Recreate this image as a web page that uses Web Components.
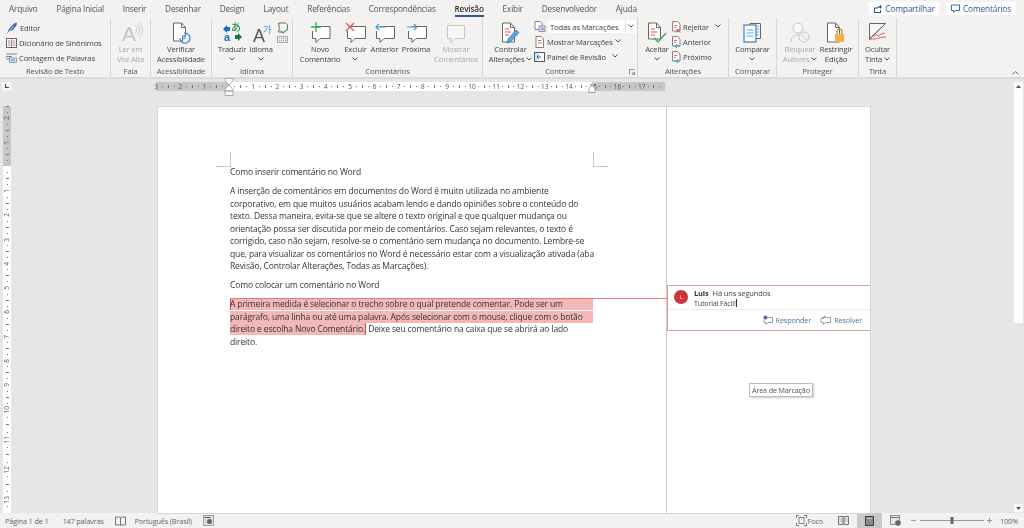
<!DOCTYPE html>
<html lang="pt-BR"><head><meta charset="utf-8"><title>Word</title>
<style>
html,body{margin:0;height:100%;overflow:hidden;background:#e6e6e6}
body{font:7.600px "Open Sans","Noto Sans",sans-serif;color:#444;letter-spacing:-.15px}
word-app{width:1024px;height:528px;filter:blur(.3px)}
</style></head><body>
<word-app>
  <w-tabbar slot="tabs">
    <w-tab>Arquivo</w-tab><w-tab>Página Inicial</w-tab><w-tab>Inserir</w-tab><w-tab>Desenhar</w-tab><w-tab>Design</w-tab><w-tab>Layout</w-tab><w-tab>Referências</w-tab><w-tab>Correspondências</w-tab><w-tab active>Revisão</w-tab><w-tab>Exibir</w-tab><w-tab>Desenvolvedor</w-tab><w-tab>Ajuda</w-tab>
    <w-share slot="right" style="width:70px"><w-icon name="share"></w-icon>Compartilhar</w-share>
    <w-share slot="right" style="width:70px"><w-icon name="cmt"></w-icon>Comentários</w-share>
  </w-tabbar>
  <w-ribbon slot="ribbon">
    <r-group label="Revisão de Texto" style="width:111px;padding-left:6px">
      <r-col>
        <r-small><w-icon name="editor"></w-icon>Editor</r-small>
        <r-small><w-icon name="thes"></w-icon>Dicionário de Sinônimos</r-small>
        <r-small><w-icon name="count"></w-icon>Contagem de Palavras</r-small>
      </r-col>
    </r-group>
    <r-group label="Fala" style="width:40px">
      <r-btn disabled style="width:39px"><w-icon slot="icon" name="read"></w-icon>Ler em<br>Voz Alta</r-btn>
    </r-group>
    <r-group label="Acessibilidade" style="width:61px">
      <r-btn style="width:60px"><w-icon slot="icon" name="access"></w-icon>Verificar<br>Acessibilidade</r-btn>
    </r-group>
    <r-group label="Idioma" style="width:81px;padding-left:3px">
      <r-btn style="width:34px"><w-icon slot="icon" name="trans"></w-icon>Traduzir<br><w-chev></w-chev></r-btn>
      <r-btn style="width:24px"><w-icon slot="icon" name="lang"></w-icon>Idioma<br><w-chev></w-chev></r-btn>
      <r-col style="padding:2px 0 0 4px;gap:2px"><w-icon name="langdoc"></w-icon><w-icon name="kbd"></w-icon></r-col>
    </r-group>
    <r-group label="Comentários" style="width:190px;padding-left:5px">
      <r-btn style="width:44px"><w-icon slot="icon" name="newc"></w-icon>Novo<br>Comentário</r-btn>
      <r-btn style="width:27px"><w-icon slot="icon" name="del"></w-icon>Excluir<br><w-chev></w-chev></r-btn>
      <r-btn style="width:31px"><w-icon slot="icon" name="prev"></w-icon>Anterior</r-btn>
      <r-btn style="width:32px"><w-icon slot="icon" name="next"></w-icon>Próxima</r-btn>
      <r-btn disabled style="width:48px"><w-icon slot="icon" name="show"></w-icon>Mostrar<br>Comentários</r-btn>
    </r-group>
    <r-group label="Controle" launcher style="width:155px;padding-left:4px">
      <r-btn style="width:47px"><w-icon slot="icon" name="track"></w-icon>Controlar<br>Alterações <w-chev></w-chev></r-btn>
      <r-col style="margin-top:-2px">
        <r-small><w-icon name="markup"></w-icon><w-select>Todas as Marcações</w-select></r-small>
        <r-small><w-icon name="showm"></w-icon>Mostrar Marcações <w-chev></w-chev></r-small>
        <r-small><w-icon name="pane"></w-icon>Painel de Revisão &nbsp;<w-chev></w-chev></r-small>
      </r-col>
    </r-group>
    <r-group label="Alterações" style="width:91px;padding-left:4px">
      <r-btn style="width:30px"><w-icon slot="icon" name="accept"></w-icon>Aceitar<br><w-chev></w-chev></r-btn>
      <r-col style="margin-top:-2px">
        <r-small><w-icon name="reject"></w-icon>Rejeitar &nbsp;<w-chev></w-chev></r-small>
        <r-small><w-icon name="aprev"></w-icon>Anterior</r-small>
        <r-small><w-icon name="anext"></w-icon>Próximo</r-small>
      </r-col>
    </r-group>
    <r-group label="Comparar" style="width:48px">
      <r-btn style="width:47px"><w-icon slot="icon" name="compare"></w-icon>Comparar<br><w-chev></w-chev></r-btn>
    </r-group>
    <r-group label="Proteger" style="width:82px;padding-left:4px">
      <r-btn disabled style="width:38px"><w-icon slot="icon" name="block"></w-icon>Bloquear<br>Autores <w-chev></w-chev></r-btn>
      <r-btn style="width:34px"><w-icon slot="icon" name="restrict"></w-icon>Restringir<br>Edição</r-btn>
    </r-group>
    <r-group label="Tinta" style="width:38px">
      <r-btn style="width:37px"><w-icon slot="icon" name="ink"></w-icon>Ocultar<br>Tinta <w-chev></w-chev></r-btn>
    </r-group>
  </w-ribbon>
  <w-workspace slot="work">
    <w-tabstop slot="corner"></w-tabstop>
    <w-hruler slot="hruler"></w-hruler>
    <w-vruler slot="vruler"></w-vruler>
    <w-page slot="page">
      <w-para><w-line>Como inserir comentário no Word</w-line></w-para>
      <w-para>
        <w-line>A inserção de comentários em documentos do Word é muito utilizada no ambiente</w-line>
        <w-line>corporativo, em que muitos usuários acabam lendo e dando opiniões sobre o conteúdo do</w-line>
        <w-line>texto. Dessa maneira, evita-se que se altere o texto original e que qualquer mudança ou</w-line>
        <w-line>orientação possa ser discutida por meio de comentários. Caso sejam relevantes, o texto é</w-line>
        <w-line>corrigido, caso não sejam, resolve-se o comentário sem mudança no documento. Lembre-se</w-line>
        <w-line>que, para visualizar os comentários no Word é necessário estar com a visualização ativada (aba</w-line>
        <w-line>Revisão, Controlar Alterações, Todas as Marcações).</w-line>
      </w-para>
      <w-para><w-line>Como colocar um comentário no Word</w-line></w-para>
      <w-para>
        <w-line><w-mark full start>A primeira medida é selecionar o trecho sobre o qual pretende comentar. Pode ser um</w-mark></w-line>
        <w-line><w-mark full>parágrafo, uma linha ou até uma palavra. Após selecionar com o mouse, clique com o botão</w-mark></w-line>
        <w-line><w-mark end>direito e escolha Novo Comentário.</w-mark> Deixe seu comentário na caixa que se abrirá ao lado</w-line>
        <w-line>direito.</w-line>
      </w-para>
      <w-comment slot="margin" author="Luis" time="Há uns segundos">Tutorial Fácil!</w-comment>
      <w-tip slot="margin">Área de Marcação</w-tip>
    </w-page>
    <w-scroll slot="scroll"></w-scroll>
  </w-workspace>
  <w-status slot="status">
    <span style="margin-left:5px">Página 1 de 1</span>
    <span style="margin-left:14px">147 palavras</span>
    <w-icon style="margin-left:11px" name="book"></w-icon>
    <span style="margin-left:9px">Português (Brasil)</span>
    <w-icon style="margin-left:11px" name="macro"></w-icon>
    <w-icon slot="right" name="focus"></w-icon>
    <span slot="right" style="margin-left:1px">Foco</span>
    <w-icon slot="right" style="margin-left:15px" name="vread"></w-icon>
    <w-view slot="right"><w-icon name="vprint"></w-icon></w-view>
    <w-icon slot="right" style="margin-left:8px" name="vweb"></w-icon>
    <w-zoom slot="right"></w-zoom>
    <span slot="right" style="margin:0 6px 0 8px">100%</span>
  </w-status>
</word-app>
<script>
const ICONS={
 editor:[12,12,'<path d="M1 11.5 3 7 8 1.5l3-1-.5 3L7 8l-3 1z" fill="#3b6fb5"/><path d="M2 11 8 4" stroke="#fff" stroke-width=".6"/>'],
 thes:[11,10,'<rect x=".5" y=".5" width="10" height="9" fill="#fff" stroke="#666"/><path d="M5.500.5v9M2 3h2.500M2 5h2.500M2 7h2.500" stroke="#777" stroke-width=".8"/><path d="M6.500 3h3M6.500 5h3M6.500 7h3" stroke="#c55" stroke-width=".8"/>'],
 count:[11,10,'<path d="M0 1h11M0 3.500h6M0 6h4" stroke="#666" stroke-width=".8"/><rect x="3.500" y="5" width="7" height="4.500" fill="#dbe9f6" stroke="#3b82c4" stroke-width=".7"/><path d="M5 7.300h4" stroke="#3b82c4"/>'],
 read:[22,20,'<text x="2" y="19" font-size="21" letter-spacing="0" font-family="Liberation Sans" fill="#c4c4c4">A</text><path d="M15 3a5 5 0 0 1 0 8M17 1.500a8 8 0 0 1 0 12M19 0a11 11 0 0 1 0 16" fill="none" stroke="#cfcfcf"/>'],
 access:[19,22,'<path d="M1.500 1h8l4 4.500V14h-3v5h-9z" fill="#fff" stroke="#666"/><path d="M9.500 1v4.500h4" fill="none" stroke="#666"/><path d="M8 16a5 5 0 1 0 4-4.800" fill="none" stroke="#3b8fd4" stroke-width="1.300"/><path d="M13 13v3.500h-3" fill="none" stroke="#3b8fd4"/>'],
 trans:[19,20,'<path d="M0 7 4 3v2h3v4H4v2z" fill="#1b6ec2"/><path d="M19 15l-4 4v-2h-3v-4h3v-2z" fill="#107c41"/><text x="8" y="9" font-size="10" letter-spacing="0" font-family="Noto Sans CJK JP" fill="#107c41">あ</text><text x="1" y="19" font-size="11" letter-spacing="0" font-weight="700" font-family="Liberation Sans" fill="#1b6ec2">a</text>'],
 lang:[20,20,'<text x="2" y="20" font-size="18" letter-spacing="0" font-family="Liberation Sans" fill="#555">A</text><text x="12" y="11" font-size="9" letter-spacing="0" font-family="Noto Sans CJK KR" fill="#3b9be0">가</text>'],
 langdoc:[12,12,'<path d="M1.500 1h7l2 2v4" fill="#fff" stroke="#666"/><path d="M1.500 1c1 3 1 6 0 9h3" fill="none" stroke="#666"/><path d="M4 9l2 2 5-4" fill="none" stroke="#4ca64c" stroke-width="1.200"/>'],
 kbd:[11,7,'<rect x=".5" y=".5" width="10" height="6" fill="#eee" stroke="#aaa"/><path d="M2 2.500h7M2 4.500h7" stroke="#999" stroke-dasharray="1 1"/>'],
 newc:[21,21,'<path d="M5 4.500h15v12H10l-4 4v-4H2.500V9" fill="#fff" stroke="#666"/><path d="M6 0v10M1 5h10" stroke="#2fa84f" stroke-width="1.300"/>'],
 del:[21,21,'<path d="M6 4.500h14.500v12H10l-4 4v-4H2.500V9" fill="#fff" stroke="#666"/><path d="M1 1l8 8M9 1l-8 8" stroke="#e4514f" stroke-width="1.200"/>'],
 prev:[21,21,'<path d="M6 4.500h14.500v12H10l-4 4v-4H2.500V9" fill="#fff" stroke="#666"/><path d="M12 5H2M5 2 2 5l3 3" fill="none" stroke="#3b9be0" stroke-width="1.200"/>'],
 next:[21,21,'<path d="M6 4.500h14.500v12H10l-4 4v-4H2.500V9" fill="#fff" stroke="#666"/><path d="M1 5h10M8 2l3 3-3 3" fill="none" stroke="#3b9be0" stroke-width="1.200"/>'],
 show:[20,21,'<path d="M1.500 3.500h17v13H9l-4 4v-4H1.500z" fill="#f7f7f7" stroke="#c4c4c4"/>'],
 track:[19,21,'<path d="M1.500 1h8l4 4.500V20h-12z" fill="#fff" stroke="#666"/><path d="M9.500 1v4.500h4" fill="none" stroke="#666"/><path d="M4 7h4M4 10h6M4 13h4" stroke="#e4514f"/><path d="M6 21l1-4 8-9 3 2.500-8 9z" fill="#5aa5dc" stroke="#2e7cb8" stroke-width=".7"/>'],
 markup:[11,11,'<path d="M1 .5h5l2 2v6H1z" fill="#fff" stroke="#666" stroke-width=".8"/><rect x="5" y="5" width="6" height="5.500" fill="#d8e6f3" stroke="#3b82c4" stroke-width=".7"/><path d="M7 6.500l3 3M10 6.500l-3 3" stroke="#d33" stroke-width=".8"/>'],
 showm:[11,12,'<path d="M2 .5h5l2.500 2.500v8.500H2z" fill="#fff" stroke="#666" stroke-width=".8"/><path d="M4 4.500h3M4 7h3.500" stroke="#e4514f"/>'],
 pane:[11,10,'<rect x=".5" y=".5" width="10" height="9" fill="#fff" stroke="#555"/><rect x="1" y="1" width="3" height="8" fill="#cfe2f3"/><path d="M7 5H3M5 3 3 5l2 2" fill="none" stroke="#1b6ec2"/>'],
 accept:[20,22,'<path d="M1.500 1h8l4 4.500V17h-12z" fill="#fff" stroke="#666"/><path d="M9.500 1v4.500h4" fill="none" stroke="#666"/><path d="M4 7h4M4 10h6M4 13h4" stroke="#e4514f"/><path d="M7 16l4 4 8-9" fill="none" stroke="#4ca64c" stroke-width="1.400"/>'],
 reject:[9,12,'<path d="M.5.5h5l2.500 2.500v7H.5z" fill="#fff" stroke="#666" stroke-width=".8"/><path d="M2 4.500h3M2 6.500h2" stroke="#e4514f" stroke-width=".8"/><path d="M4 7.500l4 4M8 7.500l-4 4" stroke="#d33"/>'],
 aprev:[9,12,'<path d="M.5.5h5l2.500 2.500v7H.5z" fill="#fff" stroke="#666" stroke-width=".8"/><path d="M2 4.500h3M2 6.500h2" stroke="#e4514f" stroke-width=".8"/><path d="M8 10H3M5 8 3 10l2 2" fill="none" stroke="#3b9be0"/>'],
 anext:[9,12,'<path d="M.5.5h5l2.500 2.500v7H.5z" fill="#fff" stroke="#666" stroke-width=".8"/><path d="M2 4.500h3M2 6.500h2" stroke="#e4514f" stroke-width=".8"/><path d="M2 10h5M5 8l2 2-2 2" fill="none" stroke="#3b9be0"/>'],
 compare:[19,20,'<path d="M7 1.500h10.500v15H7z" fill="#fff" stroke="#666"/><path d="M13 4h3M13 7h3M13 10h3M13 13h3" stroke="#777" stroke-width=".8"/><rect x="1" y="3" width="12" height="17" fill="#fff" stroke="#2e86d1" stroke-width="1.200"/><path d="M3.500 8h7M3.500 11h7M3.500 14h7" stroke="#5aa5dc"/>'],
 block:[20,21,'<circle cx="8" cy="6" r="5" fill="#f8f8f8" stroke="#c4c4c4"/><path d="M1 20c0-5 3-7 7-7 2 0 3 .500 4 1" fill="none" stroke="#c4c4c4"/><circle cx="14" cy="15" r="5" fill="#f3f2f1" stroke="#c4c4c4"/><path d="M10.500 11.500l7 7" stroke="#c4c4c4"/>'],
 restrict:[20,21,'<path d="M1.500 1h8l4 4.500V20h-12z" fill="#fff" stroke="#666"/><path d="M9.500 1v4.500h4" fill="none" stroke="#666"/><rect x="9" y="12" width="9" height="8" fill="#f0b04c"/><path d="M11 12V9.500a2.500 2.500 0 0 1 5 0V12" fill="none" stroke="#b88430" stroke-width="1.200"/>'],
 ink:[19,19,'<path d="M1.500 1.500h16L1.500 17z" fill="#f7f7f7" stroke="#666"/><path d="M6 15c2-4 4-2 4-1s3-3 7-3" fill="none" stroke="#e4514f"/><path d="M1 18c3-2 4-1 6-1s5-2 11-2" fill="none" stroke="#e4514f"/><path d="M1.500 17 17.500 1.500" stroke="#666"/>'],
 share:[9,9,'<path d="M1 3.500h3v1H2v3.500h5V6h1v3H1z" fill="#2b579a"/><path d="M4 5c0-2 1-3 3-3V.5L9 3 7 5V3.500C5.500 3.500 5 4 4 5z" fill="#2b579a"/>'],
 cmt:[9,9,'<path d="M.5 1h8v5.500H4L2.500 8.500v-2h-2z" fill="none" stroke="#2b579a" stroke-width=".9"/>'],
 reply:[10,10,'<path d="M2 2.500h7.500v5H5L3 9.500v-2H1V4" fill="#fff" stroke="#888" stroke-width=".8"/><circle cx="2.500" cy="2.500" r="2" fill="#7a4fb5"/>'],
 resolve:[11,10,'<path d="M2 2.500h8.500v5H5.500L3.500 9.500v-2H1V4" fill="#fff" stroke="#888" stroke-width=".8"/><path d="M1 2.500l1.500 1.500 3-3.500" fill="none" stroke="#4ca64c"/>'],
 book:[11,10,'<path d="M.5 1h4l1 1 1-1h4v8h-4l-1 .500-1-.500h-4zM5.500 2v7" fill="none" stroke="#666" stroke-width=".9"/>'],
 macro:[11,11,'<rect x=".5" y=".5" width="10" height="10" fill="#ddd" stroke="#888" stroke-width=".7"/><circle cx="6.500" cy="6.500" r="2.500" fill="#666"/><path d="M1.500 2.500h6" stroke="#666"/>'],
 focus:[11,11,'<path d="M.5 3V.5H3M8 .5h2.500V3M.5 8v2.500H3M8 10.500h2.500V8" fill="none" stroke="#666" stroke-width=".9"/><rect x="3" y="2.500" width="5" height="6" fill="none" stroke="#666" stroke-width=".8"/>'],
 vread:[11,9,'<path d="M.5.5h4.500v8H.5zM6 .5h4.500v8H6z" fill="#eee" stroke="#666" stroke-width=".9"/><path d="M1.500 3h2.500M1.500 5h2.500M7 3h2.500M7 5h2.500" stroke="#888" stroke-width=".7"/>'],
 vprint:[9,10,'<rect x=".5" y=".5" width="8" height="9" fill="#888" stroke="#444"/><path d="M2 2.500h5" stroke="#ccc"/>'],
 vweb:[11,11,'<rect x=".5" y=".5" width="9" height="9" fill="#e6e6e6" stroke="#777" stroke-width=".8"/><path d="M.5 2.500h9" stroke="#777"/><circle cx="8" cy="8" r="2.800" fill="#666"/>']
};
function def(name,css,html,extra){
  const tpl=document.createElement('template');
  tpl.innerHTML='<style>'+css+'</style>'+html;
  customElements.define(name,class extends HTMLElement{
    constructor(){super();this.attachShadow({mode:'open'}).appendChild(tpl.content.cloneNode(true));}
    connectedCallback(){if(extra)extra.call(this,this.shadowRoot);}
  });
}
def('word-app',':host{display:flex;flex-direction:column;overflow:hidden}',
 '<slot name="tabs"></slot><slot name="ribbon"></slot><slot name="work"></slot><slot name="status"></slot>');
def('w-tabbar',`:host{display:flex;height:18px;background:#f3f2f1;padding-left:9px;gap:18.800px;font-size:8.200px;align-items:stretch;flex:none}
 .r{margin-left:auto;display:flex;gap:7px;padding:2px 8px 0 0}`,'<slot></slot><div class="r"><slot name="right"></slot></div>');
def('w-tab',`:host{display:block;color:#555;line-height:17px;position:relative;white-space:nowrap}
 :host([active]){color:#333;font-weight:600;box-shadow:inset 0 -2px 0 #2b579a;height:17px}`,'<slot></slot>');
def('w-share',`:host{display:flex;align-items:center;justify-content:center;gap:3px;height:13px;background:#fff;color:#2b579a;font-size:8.300px;white-space:nowrap}`,'<slot></slot>');
def('w-icon',':host{display:inline-flex;flex:none;vertical-align:middle}svg{display:block;overflow:visible}','',function(r){
  const i=ICONS[this.getAttribute('name')];
  if(r.querySelector('svg'))return;
  const s=document.createElementNS('http://www.w3.org/2000/svg','svg');
  s.setAttribute('width',i[0]);s.setAttribute('height',i[1]);s.setAttribute('viewBox','0 0 '+i[0]+' '+i[1]);s.innerHTML=i[2];r.appendChild(s);
});
def('w-chev',':host{display:inline-block;vertical-align:middle;line-height:0;margin-top:-1px}',
 '<svg width="6" height="4" viewBox="0 0 6 4"><path d="M.5.500 3 3 5.500.500" fill="none" stroke="#555"/></svg>');
def('w-ribbon',`:host{display:flex;height:61px;background:#f3f2f1;flex:none;box-sizing:border-box;border-bottom:2px solid #dcdbda;position:relative}
 svg{position:absolute;right:5px;bottom:2px}`,'<slot></slot><svg width="7" height="4" viewBox="0 0 7 4"><path d="M.5 3.500 3.500.5l3 3" fill="none" stroke="#666"/></svg>');
def('r-group',`:host{display:flex;flex-direction:column;box-sizing:border-box;height:59px;padding-top:3px;position:relative;flex:none;border-right:1px solid #d8d7d6}
 .c{flex:1;display:flex;min-height:0;align-items:flex-start}
 .l{text-align:center;line-height:11px;height:11px;color:#555;font-size:7.700px;white-space:nowrap;margin-left:var(--lm,0)}
 .d{position:absolute;right:2px;bottom:2px;width:6px;height:6px;display:none}
 :host([launcher]) .d{display:block}`,
 '<div class="c"><slot></slot></div><div class="l"></div><svg class="d" viewBox="0 0 6 6"><path d="M.5 5.500V.5h5M3 3l2.500 2.500M5.500 3v2.500H3" fill="none" stroke="#777" stroke-width=".8"/></svg>',
 function(r){r.querySelector('.l').textContent=this.getAttribute('label');
   const p=parseFloat(this.style.paddingLeft)||0; if(p) this.style.setProperty('--lm','-'+p+'px');});
def('r-btn',`:host{display:flex;flex-direction:column;align-items:center;flex:none;text-align:center;line-height:10px;color:#444;white-space:nowrap}
 :host([disabled]){color:#a9a9a9}
 .i{height:23px;display:flex;align-items:flex-start;justify-content:center;padding-top:1px;box-sizing:border-box}`,
 '<div class="i"><slot name="icon"></slot></div><div><slot></slot></div>');
def('r-col',':host{display:flex;flex-direction:column;flex:none;margin-top:-1px}','<slot></slot>');
def('r-small',`:host{display:flex;align-items:center;gap:2px;height:15px;white-space:nowrap;color:#444}`,'<slot></slot>');
def('w-select',`:host{display:flex;width:88px;height:13px;background:#fff;margin-left:1px;align-items:center;box-sizing:border-box;padding-left:2px;position:relative}
 .b{position:absolute;right:0;top:0;bottom:0;width:10px;border-left:1px solid #e0e0e0;display:flex;align-items:center;justify-content:center}`,
 '<slot></slot><span class="b"><w-chev></w-chev></span>');
def('w-workspace',`:host{display:grid;grid-template-columns:156px 858px 10px;grid-template-rows:28px 406px;background:#e6e6e6;flex:none;height:434px}
 .s{grid-row:1/3;grid-column:3;display:flex}`,
 '<div><slot name="corner"></slot></div><div><slot name="hruler"></slot></div><div class="s"><slot name="scroll"></slot></div><div><slot name="vruler"></slot></div><div><slot name="page"></slot></div>');
def('w-tabstop',`:host{display:block;width:10px;height:9px;margin:3px 0 0 2px;background:#f4f4f4;position:relative}
 i{position:absolute;left:3px;top:2px;width:3px;height:3px;border:solid #444;border-width:0 0 1.500px 1.500px}`,'<i></i>');
def('w-hruler',`:host{display:block;width:509px;height:9px;margin-top:3px;position:relative;background:linear-gradient(90deg,#c6c6c6 73px,#fff 73px,#fff 436px,#c6c6c6 436px)}
 .w{display:flex;margin-left:-3px;height:9px;overflow:hidden;width:512px}
 .c{flex:0 0 24.250px;display:grid;grid-template-columns:repeat(4,1fr);align-items:center;justify-items:center;font:6.500px/9px "Open Sans",sans-serif;letter-spacing:0;color:#555}
 b{display:block;background:#777}.d{width:1px;height:1px}.t{width:1px;height:3px}
 svg{position:absolute;top:-4px}`,
 `<div class="w"></div>
 <svg style="left:68px" width="10" height="18" viewBox="0 0 10 18"><path d="M1 .5h8v2L5 7 1 2.500zM1 11.500 5 7l4 4.500V13H1zM1 13h8v4.500H1z" fill="#fff" stroke="#999" stroke-width=".8"/></svg>
 <svg style="left:432px;top:2px" width="8" height="9" viewBox="0 0 8 9"><path d="M1 8.500V4.500L4 1l3 3.500v4z" fill="#fff" stroke="#888" stroke-width=".8"/></svg>`,
 function(r){const w=r.querySelector('.w');if(w.firstChild)return;let h='';
  for(let n=-3;n<=17;n++){h+='<div class="c"><span>'+(n?Math.abs(n):'')+'</span><b class="d"></b><b class="t"></b><b class="d"></b></div>';}
  w.innerHTML=h;});
def('w-vruler',`:host{display:block;width:8px;height:407px;margin:-1px 0 0 3px;overflow:hidden;background:linear-gradient(180deg,#c6c6c6 60px,#fff 60px)}
 .w{display:flex;flex-direction:column;margin-top:-15px}
 .c{flex:0 0 24.250px;display:grid;grid-template-rows:repeat(4,1fr);align-items:center;justify-items:center;font:6.500px/8px "Open Sans",sans-serif;letter-spacing:0;color:#555}
 span{writing-mode:vertical-rl;transform:rotate(180deg)}
 b{display:block;background:#777}.d{width:1px;height:1px}.t{width:3px;height:1px}`,'<div class="w"></div>',
 function(r){const w=r.querySelector('.w');if(w.firstChild)return;let h='';
  for(let n=-3;n<=16;n++){const lab=(n&&n>-3&&n<15)?Math.abs(n):'';h+='<div class="c"><span>'+lab+'</span><b class="d"></b><b class="t"></b><b class="d"></b></div>';}
  w.innerHTML=h;});
def('w-page',`:host{display:flex;width:712px;height:406px;margin-left:2px;background:#fff;position:relative;overflow:hidden;color:#363636;box-shadow:0 0 0 1px #d6d6d6}
 .doc{width:508px;box-sizing:border-box;padding:59px 0 0 72px;flex:none}
 .m{flex:1;border-left:1px solid #c9c9c9;position:relative;padding-top:178px}
 .crop{position:absolute;width:14px;height:14px;top:45px;border:solid #c4c4c4;border-width:0}
 .a{left:58px;border-right-width:1px;border-bottom-width:1px}.b{left:435px;border-left-width:1px;border-bottom-width:1px}
 .link{position:absolute;left:72px;top:191px;width:437px;height:1px;background:#e4787a}`,
 '<div class="doc"><slot></slot></div><div class="m"><slot name="margin"></slot></div><i class="crop a"></i><i class="crop b"></i><i class="link"></i>');
def('w-para',':host{display:block;margin-bottom:6.500px}','<slot></slot>');
def('w-line',':host{display:block;height:12.500px;line-height:12.500px;font-size:8.500px;letter-spacing:-.13px;white-space:nowrap;width:363px}','<slot></slot>');
def('w-mark',`:host{background:#f2b8b8;display:inline-block;height:12px;line-height:12px}
 :host([full]){display:block;width:363px}
 :host([start]){box-shadow:inset 1px 0 0 #d9484b}
 :host([end]){box-shadow:inset -1px 0 0 #d9484b;padding-right:1px}`,'<slot></slot>');
def('w-comment',`:host{display:block;box-sizing:border-box;height:46px;border:solid #ea9a9c;border-width:1px 0 1px 1px;font-size:7.500px;color:#444}
 .t{height:24px;display:flex;box-sizing:border-box;border-bottom:1px solid #ececec;padding:4px 0 0 6px;gap:6px}
 .av{width:14px;height:14px;border-radius:50%;background:#d13438;color:#fff;font-size:6px;line-height:14px;text-align:center;flex:none}
 .h{line-height:9px;white-space:nowrap;margin-top:-1px}.h b{font-weight:700;margin-right:4px;color:#333}
 .b{line-height:10px;font-size:7px;letter-spacing:-.1px;margin-top:1px}.caret{display:inline-block;width:1px;height:8px;background:#333;vertical-align:-1px}
 .a{display:flex;justify-content:flex-end;align-items:center;height:19px;padding-right:8px;color:#4a78ad;font-size:7.300px;white-space:nowrap}
 .a span{margin-left:3px}.a w-icon+span+w-icon{margin-left:9px}`,
 `<div class="t"><div class="av">L</div><div><div class="h"><b></b><span class="tm"></span></div><div class="b"><slot></slot><i class="caret"></i></div></div></div>
  <div class="a"><w-icon name="reply"></w-icon><span>Responder</span><w-icon name="resolve"></w-icon><span>Resolver</span></div>`,
 function(r){r.querySelector('b').textContent=this.getAttribute('author');r.querySelector('.tm').textContent=this.getAttribute('time');});
def('w-tip',`:host{position:absolute;left:82px;top:276px;background:#fff;border:1px solid #bdbdbd;box-shadow:1px 1px 2px #ccc;font-size:7.200px;line-height:12px;padding:0 2px;color:#555;white-space:nowrap}`,'<slot></slot>');
def('w-scroll',`:host{display:flex;flex-direction:column;width:10px;box-sizing:border-box;padding:3px 1px 1px 0}
 .b{height:8px;background:#fbfbfb;display:flex;align-items:center;justify-content:center;flex:none}
 .th{height:233px;background:#fff;flex:none}.sp{flex:1}`,
 `<div class="b"><svg width="5" height="3" viewBox="0 0 5 3"><path d="M0 3 2.500 0 5 3z" fill="#555"/></svg></div><div class="th"></div><div class="sp"></div>
  <div class="b"><svg width="5" height="3" viewBox="0 0 5 3"><path d="M0 0 2.500 3 5 0z" fill="#555"/></svg></div>`);
def('w-status',`:host{display:flex;height:15px;background:#f3f2f1;align-items:center;flex:none;color:#666;font-size:7.300px;white-space:nowrap}
 .r{margin-left:auto;display:flex;align-items:center;height:15px}`,'<slot></slot><div class="r"><slot name="right"></slot></div>');
def('w-view',`:host{display:flex;align-items:center;justify-content:center;width:25px;height:15px;background:#c8c8c8;margin-left:8px}`,'<slot></slot>');
def('w-zoom',`:host{display:block;width:81px;height:15px;margin-left:10px}
 svg{display:block}`,'<svg width="81" height="15" viewBox="0 0 81 15"><path d="M0 7.500h5M9 7.500h64M76 7.500h5M78.500 5v5" stroke="#999"/><rect x="39.500" y="4" width="3" height="7" fill="#666"/></svg>');
</script>
</body></html>
